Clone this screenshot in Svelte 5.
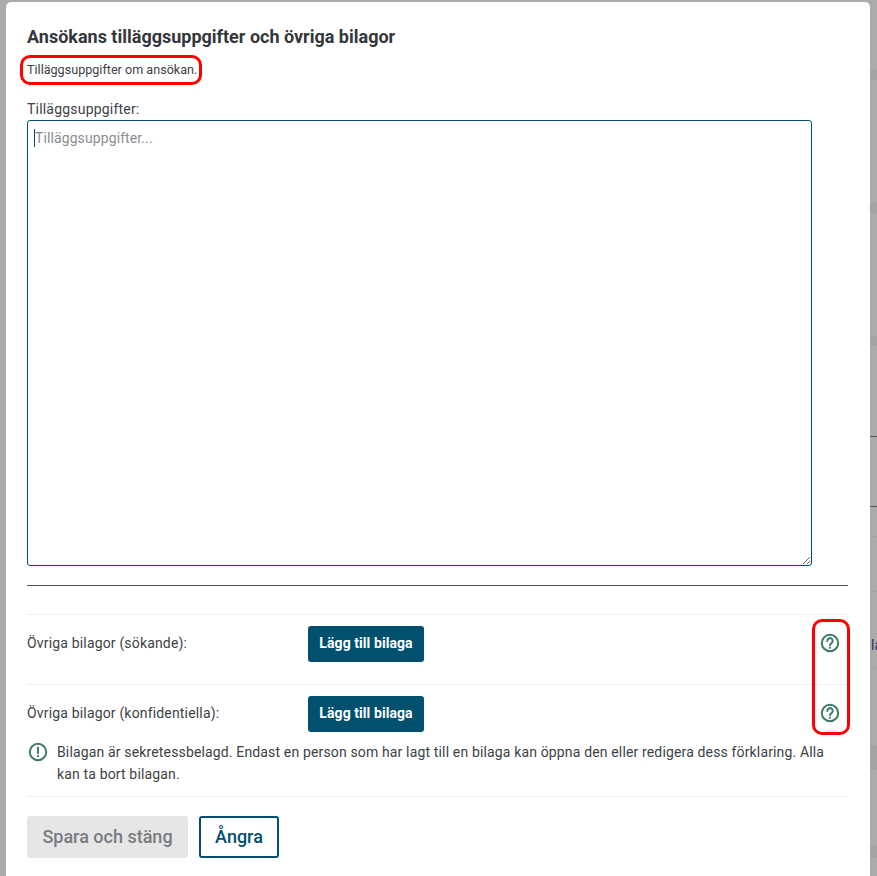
<script lang="ts">
	const attachments = [
		{ label: 'Övriga bilagor (sökande):' },
		{ label: 'Övriga bilagor (konfidentiella):' }
	];
	// rows of the page behind the dialog, visible in the right-hand strip
	const bands = [
		{ top: 69, height: 11 },
		{ top: 203, height: 10 },
		{ top: 336, height: 10 },
		{ top: 745, height: 25 },
		{ top: 845, height: 13 }
	];
</script>

<div class="backdrop">
	<div class="page-behind" aria-hidden="true">
		{#each bands as band}
			<div class="band" style="top: {band.top}px; height: {band.height}px"></div>
		{/each}
		<div class="rule dark" style="top: 436px"></div>
		<div class="rule dark" style="top: 506px"></div>
		<div class="rule" style="top: 536px"></div>
		<div class="rule" style="top: 591px"></div>
		<div class="rule" style="top: 667px"></div>
		<span class="peek">la</span>
	</div>

	<section class="modal">
		<h2>Ansökans tilläggsuppgifter och övriga bilagor</h2>
		<div class="lead-row"><p class="lead">Tilläggsuppgifter om ansökan.</p></div>

		<label class="field-label" for="extra">Tilläggsuppgifter:</label>
		<div class="text-wrap">
			<textarea id="extra" placeholder="Tilläggsuppgifter..."></textarea>
			<span class="caret"></span>
		</div>

		<hr class="divider" />

		<div class="attachments">
			{#each attachments as item}
				<div class="attach-row">
					<span class="attach-label">{item.label}</span>
					<button class="add" type="button">Lägg till bilaga</button>
					<svg class="icon help" viewBox="0 0 20 20" fill="none" aria-hidden="true">
						<circle cx="10" cy="10" r="8.2" />
						<path d="M7.3 7.9a2.7 2.7 0 1 1 4.2 2.2c-1 .7-1.5 1.1-1.5 2.2" />
						<circle class="dot" cx="10" cy="14.8" r="1.1" />
					</svg>
				</div>
			{/each}
			<div class="marker" aria-hidden="true"></div>
		</div>

		<div class="notice">
			<svg class="icon" viewBox="0 0 20 20" fill="none" aria-hidden="true">
				<circle cx="10" cy="10" r="8.2" />
				<path d="M10 5.6v5.6" />
				<circle class="dot" cx="10" cy="14.2" r="1.1" />
			</svg>
			<p>
				Bilagan är sekretessbelagd. Endast en person som har lagt till en bilaga kan öppna den eller
				redigera dess förklaring. Alla kan ta bort bilagan.
			</p>
		</div>

		<div class="actions">
			<button class="save" type="button" disabled>Spara och stäng</button>
			<button class="undo" type="button">Ångra</button>
		</div>
	</section>
</div>

<style>
	:global(body) {
		margin: 0;
		background: #ababab;
		font-family: Roboto, 'Liberation Sans', sans-serif;
	}

	.backdrop {
		position: relative;
		height: 876px;
		overflow: hidden;
		padding: 2px 7px 0 6px;
		box-sizing: border-box;
	}

	.page-behind {
		position: absolute;
		top: 0;
		bottom: 0;
		left: 870px;
		right: 0;
		overflow: hidden;
	}

	.band {
		position: absolute;
		left: 0;
		right: 0;
		background: #a3a3a3;
	}

	.rule {
		position: absolute;
		left: 0;
		right: 0;
		height: 1px;
		background: #a4a4a4;
	}

	.rule.dark {
		background: #555;
	}

	.peek {
		position: absolute;
		left: 1px;
		top: 637px;
		font-size: 14px;
		line-height: 16px;
		color: #3b2f55;
	}

	.modal {
		position: relative;
		background: #fff;
		border-radius: 5px 5px 0 0;
		height: 900px;
		box-sizing: border-box;
		padding: 24px 22px 0 21px;
		color: #3d4246;
	}

	h2 {
		margin: 0;
		font-size: 18px;
		line-height: 22px;
		font-weight: 700;
		color: #33373c;
	}

	.lead-row {
		display: flex;
		margin-top: 7px;
	}

	.lead {
		margin: 0 0 0 -7px;
		padding: 0 1.5px 0 4px;
		height: 30px;
		line-height: 24px;
		font-size: 12.6px;
		box-sizing: border-box;
		border: 3px solid #f00;
		border-radius: 10px;
	}

	.field-label {
		display: block;
		margin-top: 15px;
		font-size: 14px;
		line-height: 18px;
		letter-spacing: 0.2px;
	}

	.text-wrap {
		position: relative;
		width: 785px;
		height: 446px;
		margin-top: 2px;
	}

	textarea {
		display: block;
		width: 100%;
		height: 100%;
		box-sizing: border-box;
		border: 1px solid #00506e;
		border-radius: 3px;
		padding: 8px 7px;
		margin: 0;
		outline: none;
		resize: vertical;
		font: 14px/18px Roboto, sans-serif;
		letter-spacing: 0.1px;
		background: #fff;
	}

	textarea::placeholder {
		color: #8a8d90;
		opacity: 1;
	}

	.caret {
		position: absolute;
		left: 7px;
		top: 9px;
		width: 1px;
		height: 18px;
		background: #00506e;
	}

	.divider {
		margin: 19px 0 0;
		border: 0;
		border-top: 1px solid #4d5357;
	}

	.attachments {
		position: relative;
		display: flex;
		flex-direction: column;
		gap: 22px;
		margin-top: 28px;
	}

	.attach-row {
		display: flex;
		align-items: center;
		padding-top: 11px;
		border-top: 1px solid #f0f0f0;
		font-size: 14px;
		letter-spacing: 0.17px;
	}

	.attach-label {
		width: 281px;
		flex: none;
		margin-top: -2px;
	}

	.add {
		width: 116px;
		height: 36px;
		padding: 0 0 2px;
		border: 0;
		border-radius: 3px;
		background: #00506e;
		color: #fff;
		font: 700 14px Roboto, sans-serif;
		letter-spacing: 0.07px;
	}

	.icon {
		width: 20px;
		height: 20px;
		flex: none;
		stroke: #3f7a69;
		stroke-width: 2;
		stroke-linecap: round;
	}

	.icon .dot {
		fill: #3f7a69;
		stroke: none;
	}

	.help {
		margin-left: auto;
		margin-right: 8px;
		margin-top: -2px;
	}

	/* annotation frame drawn over the help icons */
	.marker {
		position: absolute;
		right: -2px;
		top: 5px;
		width: 38px;
		height: 116px;
		box-sizing: border-box;
		border: 3px solid #f00;
		border-radius: 10px;
		pointer-events: none;
	}

	.notice {
		display: flex;
		gap: 9px;
		padding: 0 0 11px 1px;
		margin-top: 9px;
		border-bottom: 1px solid #f0f0f0;
		font-size: 14px;
		line-height: 22px;
		letter-spacing: 0.15px;
	}

	.notice .icon {
		margin-top: 1px;
	}

	.notice p {
		margin: 0;
		flex: 1;
	}

	.actions {
		display: flex;
		gap: 11px;
		margin-top: 19px;
	}

	.save,
	.undo {
		height: 42px;
		box-sizing: border-box;
		border-radius: 3px;
		font: 500 18px Roboto, sans-serif;
		padding: 0 0 2px;
	}

	.save {
		width: 161px;
		border: 0;
		background: #e6e6e6;
		color: #777b80;
	}

	.undo {
		width: 80px;
		border: 2px solid #00506e;
		background: #fff;
		color: #00506e;
	}
</style>
